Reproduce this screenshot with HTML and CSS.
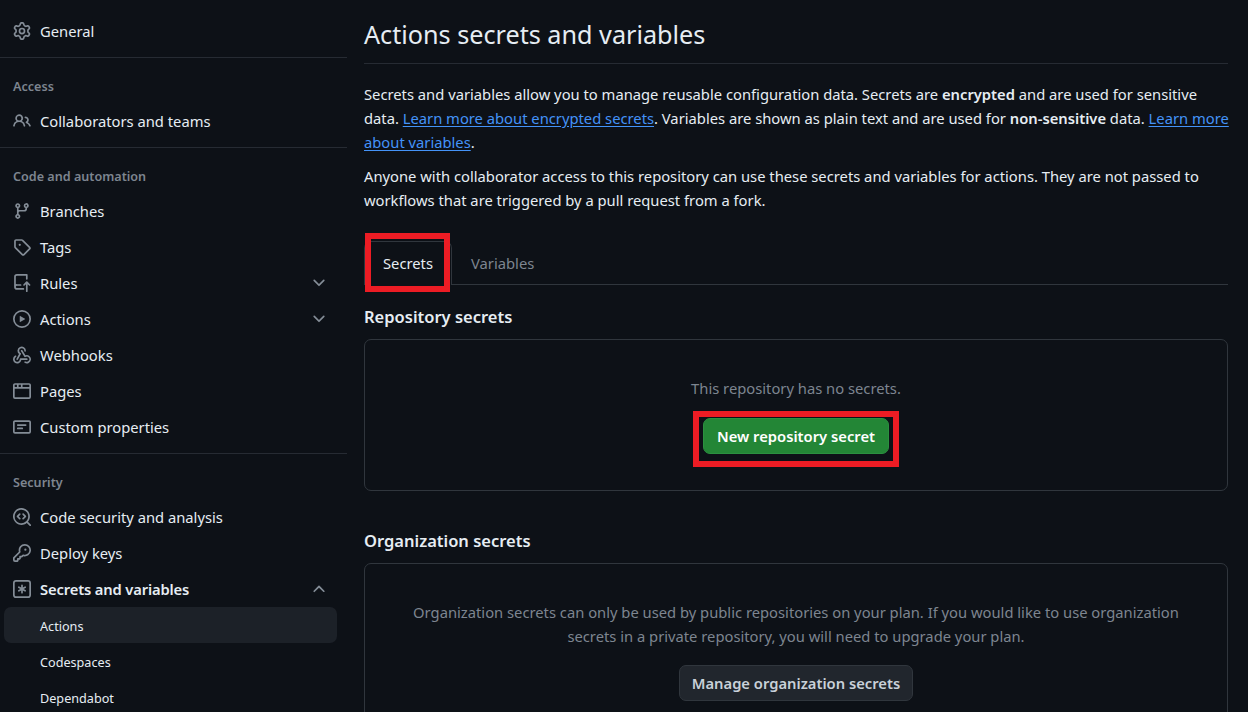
FILE: index.html
```html
<!DOCTYPE html>
<html lang="en">
<head>
<meta charset="utf-8">
<title>Actions secrets and variables</title>
<link rel="stylesheet" href="styles.css">
</head>
<body>
<svg class="defs" width="0" height="0" aria-hidden="true">
  <symbol id="i-gear" viewBox="0 0 16 16"><path d="M8 0a8.2 8.2 0 0 1 .701.031C9.444.095 9.99.645 10.16 1.29l.288 1.107c.018.066.079.158.212.224.231.114.454.243.668.386.123.082.233.09.299.071l1.103-.303c.644-.176 1.392.021 1.82.63.27.385.506.792.704 1.218.315.675.111 1.422-.364 1.891l-.814.806c-.049.048-.098.147-.088.294.016.257.016.515 0 .772-.01.147.038.246.088.294l.814.806c.475.469.679 1.216.364 1.891a7.977 7.977 0 0 1-.704 1.217c-.428.61-1.176.807-1.82.63l-1.102-.302c-.067-.019-.177-.011-.3.071a5.909 5.909 0 0 1-.668.386c-.133.066-.194.158-.211.224l-.29 1.106c-.168.646-.715 1.196-1.458 1.26a8.006 8.006 0 0 1-1.402 0c-.743-.064-1.289-.614-1.458-1.26l-.289-1.106c-.018-.066-.079-.158-.212-.224a5.738 5.738 0 0 1-.668-.386c-.123-.082-.233-.09-.299-.071l-1.103.303c-.644.176-1.392-.021-1.82-.63a8.12 8.12 0 0 1-.704-1.218c-.315-.675-.111-1.422.363-1.891l.815-.806c.05-.048.098-.147.088-.294a6.214 6.214 0 0 1 0-.772c.01-.147-.038-.246-.088-.294l-.815-.806C.635 6.045.431 5.298.746 4.623a7.92 7.92 0 0 1 .704-1.217c.428-.61 1.176-.807 1.82-.63l1.102.302c.067.019.177.011.3-.071.214-.143.437-.272.668-.386.133-.066.194-.158.211-.224l.29-1.106C6.009.645 6.556.095 7.299.03 7.53.01 7.764 0 8 0Zm-.571 1.525c-.036.003-.108.036-.137.146l-.289 1.105c-.147.561-.549.967-.998 1.189-.173.086-.34.183-.5.29-.417.278-.97.423-1.529.27l-1.103-.303c-.109-.03-.175.016-.195.045-.22.312-.412.644-.573.99-.014.031-.021.11.059.19l.815.806c.411.406.562.957.53 1.456a4.709 4.709 0 0 0 0 .582c.032.499-.119 1.05-.53 1.456l-.815.806c-.081.08-.073.159-.059.19.162.346.353.677.573.989.02.03.085.076.195.046l1.102-.303c.56-.153 1.113-.008 1.53.27.161.107.328.204.501.29.447.222.85.629.997 1.189l.289 1.105c.029.109.101.143.137.146a6.6 6.6 0 0 0 1.142 0c.036-.003.108-.036.137-.146l.289-1.105c.147-.561.549-.967.998-1.189.173-.086.34-.183.5-.29.417-.278.97-.423 1.529-.27l1.103.303c.109.029.175-.016.195-.045.22-.313.411-.644.573-.99.014-.031.021-.11-.059-.19l-.815-.806c-.411-.406-.562-.957-.53-1.456a4.709 4.709 0 0 0 0-.582c-.032-.499.119-1.05.53-1.456l.815-.806c.081-.08.073-.159.059-.19a6.464 6.464 0 0 0-.573-.989c-.02-.03-.085-.076-.195-.046l-1.102.303c-.56.153-1.113.008-1.53-.27a4.44 4.44 0 0 0-.501-.29c-.447-.222-.85-.629-.997-1.189l-.289-1.105c-.029-.11-.101-.143-.137-.146a6.6 6.6 0 0 0-1.142 0ZM11 8a3 3 0 1 1-6 0 3 3 0 0 1 6 0ZM9.5 8a1.5 1.5 0 1 0-3.001.001A1.5 1.5 0 0 0 9.5 8Z"/></symbol>
  <symbol id="i-people" viewBox="0 0 16 16"><path d="M2 5.5a3.5 3.5 0 1 1 5.898 2.549 5.508 5.508 0 0 1 3.034 4.084.75.75 0 1 1-1.482.235 4 4 0 0 0-7.9 0 .75.75 0 0 1-1.482-.236A5.507 5.507 0 0 1 3.102 8.05 3.493 3.493 0 0 1 2 5.5ZM11 4a3.001 3.001 0 0 1 2.22 5.018 5.01 5.01 0 0 1 2.56 3.012.749.749 0 0 1-.885.954.752.752 0 0 1-.549-.514 3.507 3.507 0 0 0-2.522-2.372.75.75 0 0 1-.574-.73v-.352a.75.75 0 0 1 .416-.672A1.5 1.5 0 0 0 11 5.5.75.75 0 0 1 11 4Zm-5.5-.5a2 2 0 1 0-.001 3.999A2 2 0 0 0 5.5 3.5Z"/></symbol>
  <symbol id="i-branch" viewBox="0 0 16 16"><path d="M9.5 3.25a2.25 2.25 0 1 1 3 2.122V6A2.5 2.5 0 0 1 10 8.5H6a1 1 0 0 0-1 1v1.128a2.251 2.251 0 1 1-1.5 0V5.372a2.25 2.25 0 1 1 1.5 0v1.836A2.493 2.493 0 0 1 6 7h4a1 1 0 0 0 1-1v-.628A2.25 2.25 0 0 1 9.5 3.25Zm-6 0a.75.75 0 1 0 1.5 0 .75.75 0 0 0-1.5 0Zm8.25-.75a.75.75 0 1 0 0 1.5.75.75 0 0 0 0-1.5ZM4.25 12a.75.75 0 1 0 0 1.5.75.75 0 0 0 0-1.5Z"/></symbol>
  <symbol id="i-tag" viewBox="0 0 16 16"><path d="M1 7.775V2.75C1 1.784 1.784 1 2.75 1h5.025c.464 0 .91.184 1.238.513l6.25 6.25a1.75 1.75 0 0 1 0 2.474l-5.026 5.026a1.75 1.75 0 0 1-2.474 0l-6.25-6.25A1.752 1.752 0 0 1 1 7.775Zm1.5 0c0 .066.026.13.073.177l6.25 6.25a.25.25 0 0 0 .354 0l5.025-5.025a.25.25 0 0 0 0-.354l-6.25-6.25a.25.25 0 0 0-.177-.073H2.75a.25.25 0 0 0-.25.25ZM6 5a1 1 0 1 1 0 2 1 1 0 0 1 0-2Z"/></symbol>
  <symbol id="i-push" viewBox="0 0 16 16"><path d="M1 2.5A2.5 2.5 0 0 1 3.5 0h8.75a.75.75 0 0 1 .75.75v3.5a.75.75 0 0 1-1.5 0V1.5h-8a1 1 0 0 0-1 1v6.708A2.493 2.493 0 0 1 3.5 9h3.25a.75.75 0 0 1 0 1.5H3.5a1 1 0 0 0 0 2h5.75a.75.75 0 0 1 0 1.5H3.5A2.5 2.5 0 0 1 1 11.5Zm13.23 7.79h-.001l-1.224-1.224v6.184a.75.75 0 0 1-1.5 0V9.066L10.28 10.29a.75.75 0 0 1-1.06-1.061l2.505-2.504a.75.75 0 0 1 1.06 0L15.29 9.23a.751.751 0 0 1-.018 1.042.751.751 0 0 1-1.042.018Z"/></symbol>
  <symbol id="i-play" viewBox="0 0 16 16"><path d="M8 0a8 8 0 1 1 0 16A8 8 0 0 1 8 0ZM1.5 8a6.5 6.5 0 1 0 13 0 6.5 6.5 0 0 0-13 0Zm4.879-2.773 4.264 2.559a.25.25 0 0 1 0 .428l-4.264 2.559A.25.25 0 0 1 6 10.559V5.442a.25.25 0 0 1 .379-.215Z"/></symbol>
  <symbol id="i-webhook" viewBox="0 0 16 16"><path d="M5.5 4.25a2.25 2.25 0 0 1 4.5 0 .75.75 0 0 0 1.5 0 3.75 3.75 0 1 0-6.14 2.889l-2.272 4.258a.75.75 0 0 0 1.324.706L7 7.25a.75.75 0 0 0-.309-1.015A2.25 2.25 0 0 1 5.5 4.25Z"/><path d="M7.364 3.607a.75.75 0 0 1 1.03.257l2.608 4.349a3.75 3.75 0 1 1-.628 6.785.75.75 0 0 1 .752-1.299 2.25 2.25 0 1 0-.033-3.88.75.75 0 0 1-1.03-.256L7.107 4.636a.75.75 0 0 1 .257-1.03Z"/><path d="M2.9 8.776A.75.75 0 0 1 2.625 9.8 2.25 2.25 0 1 0 6 11.75a.75.75 0 0 1 .75-.751h5.5a.75.75 0 0 1 0 1.5H7.425a3.751 3.751 0 1 1-5.55-3.998.75.75 0 0 1 1.024.274Z"/></symbol>
  <symbol id="i-browser" viewBox="0 0 16 16"><path d="M0 2.75C0 1.784.784 1 1.75 1h12.5c.966 0 1.75.784 1.75 1.75v10.5A1.75 1.75 0 0 1 14.25 15H1.75A1.75 1.75 0 0 1 0 13.25ZM14.5 6h-13v7.25c0 .138.112.25.25.25h12.5a.25.25 0 0 0 .25-.25Zm-6-3.5v2h6v-1.75a.25.25 0 0 0-.25-.25ZM5 2.5v2h2v-2Zm-3.25 0a.25.25 0 0 0-.25.25V4.5h2v-2Z"/></symbol>
  <symbol id="i-note" viewBox="0 0 16 16"><path d="M0 3.75C0 2.784.784 2 1.75 2h12.5c.966 0 1.75.784 1.75 1.75v8.5A1.75 1.75 0 0 1 14.25 14H1.75A1.75 1.75 0 0 1 0 12.25Zm1.75-.25a.25.25 0 0 0-.25.25v8.5c0 .138.112.25.25.25h12.5a.25.25 0 0 0 .25-.25v-8.5a.25.25 0 0 0-.25-.25ZM3.5 6.25a.75.75 0 0 1 .75-.75h7a.75.75 0 0 1 0 1.5h-7a.75.75 0 0 1-.75-.75Zm.75 2.25h4a.75.75 0 0 1 0 1.5h-4a.75.75 0 0 1 0-1.5Z"/></symbol>
  <symbol id="i-scan" viewBox="0 0 16 16"><path d="M8.47 4.97a.75.75 0 0 0 0 1.06L9.94 7.5 8.47 8.97a.75.75 0 1 0 1.06 1.06l2-2a.75.75 0 0 0 0-1.06l-2-2a.75.75 0 0 0-1.06 0ZM6.53 6.03a.75.75 0 0 0-1.06-1.06l-2 2a.75.75 0 0 0 0 1.06l2 2a.75.75 0 1 0 1.06-1.06L5.06 7.5l1.47-1.47Z"/><path d="M12.246 13.307a7.501 7.501 0 1 1 1.06-1.06l2.474 2.473a.749.749 0 0 1-.326 1.275.749.749 0 0 1-.734-.215ZM1.5 7.5a6.002 6.002 0 0 0 3.608 5.504 6.002 6.002 0 0 0 6.486-1.117.748.748 0 0 1 .293-.293A6 6 0 1 0 1.5 7.5Z"/></symbol>
  <symbol id="i-key" viewBox="0 0 16 16"><path d="M10.5 0a5.499 5.499 0 1 1-1.288 10.848l-.932.932a.749.749 0 0 1-.53.22H7v.75a.749.749 0 0 1-.22.53l-.5.5a.749.749 0 0 1-.53.22H5v.75a.749.749 0 0 1-.22.53l-.5.5a.749.749 0 0 1-.53.22h-2A1.75 1.75 0 0 1 0 14.25v-2c0-.199.079-.389.22-.53l4.932-4.932A5.5 5.5 0 0 1 10.5 0Zm-4 5.5c-.001.431.069.86.205 1.269a.75.75 0 0 1-.181.768L1.5 12.56v1.69c0 .138.112.25.25.25h1.69l.06-.06v-1.19a.75.75 0 0 1 .75-.75h1.19l.06-.06v-1.19a.75.75 0 0 1 .75-.75h1.19l1.023-1.025a.75.75 0 0 1 .768-.18A4 4 0 1 0 6.5 5.5ZM11 6a1 1 0 1 1 0-2 1 1 0 0 1 0 2Z"/></symbol>
  <symbol id="i-asterisk" viewBox="0 0 16 16"><path d="M0 2.75A2.75 2.75 0 0 1 2.75 0h10.5A2.75 2.75 0 0 1 16 2.75v10.5A2.75 2.75 0 0 1 13.25 16H2.75A2.75 2.75 0 0 1 0 13.25ZM2.75 1.5c-.69 0-1.25.56-1.25 1.25v10.5c0 .69.56 1.25 1.25 1.25h10.5c.69 0 1.25-.56 1.25-1.25V2.75c0-.69-.56-1.25-1.25-1.25Z"/><path d="M8 4a.75.75 0 0 1 .75.75V6.7l1.69-.975a.75.75 0 0 1 .75 1.3L9.5 8l1.69.976a.75.75 0 0 1-.75 1.298L8.75 9.3v1.951a.75.75 0 0 1-1.5 0V9.299l-1.69.976a.75.75 0 0 1-.75-1.3L6.5 8l-1.69-.975a.75.75 0 0 1 .75-1.3l1.69.976V4.75A.75.75 0 0 1 8 4Z"/></symbol>
  <symbol id="i-down" viewBox="0 0 16 16"><path d="M12.78 5.22a.749.749 0 0 1 0 1.06l-4.25 4.25a.749.749 0 0 1-1.06 0L3.22 6.28a.749.749 0 1 1 1.06-1.06L8 8.939l3.72-3.719a.749.749 0 0 1 1.06 0Z"/></symbol>
  <symbol id="i-up" viewBox="0 0 16 16"><path d="M3.22 10.53a.749.749 0 0 1 0-1.06l4.25-4.25a.749.749 0 0 1 1.06 0l4.25 4.25a.749.749 0 0 1-.326 1.275.749.749 0 0 1-.734-.215L8 6.811 4.28 10.53a.749.749 0 0 1-1.06 0Z"/></symbol>
</svg>
<div class="page">
  <nav class="sidebar">
    <div class="group first">
      <a class="row"><svg class="icon"><use href="#i-gear"/></svg><span>General</span></a>
    </div>
    <div class="group">
      <h2 class="group-title">Access</h2>
      <a class="row"><svg class="icon"><use href="#i-people"/></svg><span>Collaborators and teams</span></a>
    </div>
    <div class="group">
      <h2 class="group-title">Code and automation</h2>
      <a class="row"><svg class="icon"><use href="#i-branch"/></svg><span>Branches</span></a>
      <a class="row"><svg class="icon"><use href="#i-tag"/></svg><span>Tags</span></a>
      <a class="row"><svg class="icon"><use href="#i-push"/></svg><span>Rules</span><svg class="chev"><use href="#i-down"/></svg></a>
      <a class="row"><svg class="icon"><use href="#i-play"/></svg><span>Actions</span><svg class="chev"><use href="#i-down"/></svg></a>
      <a class="row"><svg class="icon"><use href="#i-webhook"/></svg><span>Webhooks</span></a>
      <a class="row"><svg class="icon"><use href="#i-browser"/></svg><span>Pages</span></a>
      <a class="row"><svg class="icon"><use href="#i-note"/></svg><span>Custom properties</span></a>
    </div>
    <div class="group">
      <h2 class="group-title">Security</h2>
      <a class="row"><svg class="icon"><use href="#i-scan"/></svg><span>Code security and analysis</span></a>
      <a class="row"><svg class="icon"><use href="#i-key"/></svg><span>Deploy keys</span></a>
      <a class="row strong"><svg class="icon"><use href="#i-asterisk"/></svg><span>Secrets and variables</span><svg class="chev"><use href="#i-up"/></svg></a>
      <a class="row sub current"><span>Actions</span></a>
      <a class="row sub"><span>Codespaces</span></a>
      <a class="row sub"><span>Dependabot</span></a>
    </div>
  </nav>
  <main class="main">
    <h1 class="title">Actions secrets and variables</h1>
    <p class="para">Secrets and variables allow you to manage reusable configuration data. Secrets are <b>encrypted</b> and are used for sensitive<br>data. <a class="link">Learn more about encrypted secrets</a>. Variables are shown as plain text and are used for <b>non-sensitive</b> data. <a class="link">Learn more<br>about variables</a>.</p>
    <p class="para second">Anyone with collaborator access to this repository can use these secrets and variables for actions. They are not passed to<br>workflows that are triggered by a pull request from a fork.</p>
    <div class="tabs">
      <a class="tab active">Secrets<i class="mark mark-tab"></i></a>
      <a class="tab">Variables</a>
    </div>
    <h2 class="section-title">Repository secrets</h2>
    <section class="box repo">
      <p class="empty">This repository has no secrets.</p>
      <a class="btn primary">New repository secret<i class="mark mark-btn"></i></a>
    </section>
    <h2 class="section-title org">Organization secrets</h2>
    <section class="box organization">
      <p class="empty">Organization secrets can only be used by public repositories on your plan. If you would like to use organization<br>secrets in a private repository, you will need to upgrade your plan.</p>
      <a class="btn neutral">Manage organization secrets</a>
    </section>
  </main>
</div>
</body>
</html>
```
FILE: styles.css
```css
* { box-sizing: border-box; }
html, body { margin: 0; height: 100%; overflow: hidden; background: #0d1117; }
body { font-family: "Noto Sans", "Open Sans", sans-serif; font-size: 14.75px; line-height: 24px; color: #e6edf3; }
.defs { position: absolute; }
.page { display: flex; height: 712px; overflow: hidden; }

.sidebar { width: 347px; flex: none; }
.group { border-top: 1px solid #262b33; padding-bottom: 8px; }
.group.first { border-top: 0; padding-top: 13px; padding-bottom: 8px; }
.group-title { margin: 0; padding: 17px 0 4px 13px; font-size: 12.6px; line-height: 24px; font-weight: 600; color: #7d8590; }
.row { display: flex; align-items: center; height: 36px; padding: 0 10px 0 13px; margin-right: 10px; color: #e6edf3; white-space: nowrap; }
.row .icon { width: 18px; height: 18px; fill: #848d97; flex: none; margin-right: 9px; }
.row .chev { width: 18px; height: 18px; fill: #848d97; margin-left: auto; margin-right: -1px; }
.row.strong { font-weight: 600; letter-spacing: -0.15px; }
.row.sub { padding: 2px 10px 0 36px; font-size: 12.65px; margin-left: 4px; }
.row.sub.current { background: #1c2128; border-radius: 7px; }

.main { flex: 1; min-width: 0; padding: 0 20px 0 17px; }
.title { margin: 0; height: 64px; padding-top: 14px; line-height: 40px; font-size: 25.2px; font-weight: 400; color: #e6edf3; border-bottom: 1px solid #262b33; white-space: nowrap; }
.para { margin: 18px 0 0; white-space: nowrap; }
.para.second { margin-top: 10px; }
.para b { font-weight: 600; }
.link { color: #4493f8; text-decoration: underline; text-underline-offset: 2px; }

.tabs { display: flex; margin-top: 27px; height: 46px; border-bottom: 1px solid #30363d; }
.tab { position: relative; display: flex; align-items: center; height: 45px; padding: 2px 18px 0; color: #7d8590; }
.tab.active { align-self: flex-end; color: #e6edf3; width: 88px; justify-content: center; height: 44px; padding: 0 0 2px; border: 1px solid #30363d; border-bottom: 0; border-radius: 7px 7px 0 0; background: #0d1117; margin-bottom: -1px; margin-right: 1px; }
.mark { position: absolute; border: 6px solid #ec1c24; display: block; pointer-events: none; }
.mark-tab { left: 0; top: -9px; width: 85px; height: 59px; }
.mark-btn { left: -11px; top: -8px; width: 206px; height: 56px; }

.section-title { margin: 20px 0 0; line-height: 24px; font-size: 16.5px; font-weight: 600; color: #e6edf3; }
.section-title.org { margin-top: 38px; }
.box { display: flex; flex-direction: column; align-items: center; border: 1px solid #30363d; border-radius: 7px; margin-top: 10px; text-align: center; }
.box.repo { height: 152px; padding-top: 36px; }
.box.organization { height: 200px; padding-top: 36px; }
.empty { margin: 0; color: #7d8590; white-space: nowrap; }
.btn { position: relative; display: flex; align-items: center; justify-content: center; height: 36px; border-radius: 7px; font-weight: 600; white-space: nowrap; border: 1px solid transparent; }
.btn.primary { width: 186px; margin-top: 18px; background: #238636; color: #fff; border-color: #2b9040; }
.btn.neutral { width: 234px; margin-top: 17px; background: #21262d; color: #c9d1d9; border-color: #30363d; }
```
